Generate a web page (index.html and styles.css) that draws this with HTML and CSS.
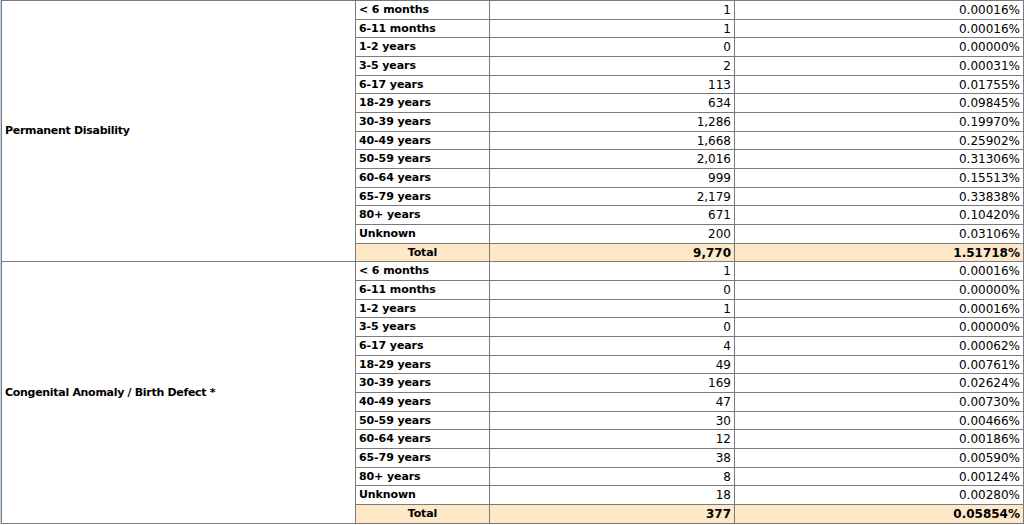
FILE: index.html
```html
<!DOCTYPE html>
<html>
<head>
<meta charset="utf-8">
<link rel="stylesheet" href="styles.css">
</head>
<body>
<div class="frame">
<table class="stats">
<colgroup><col class="c1"><col class="c2"><col class="c3"><col class="c4"></colgroup>
<tbody>
<tr><td class="group" rowspan="14">Permanent Disability</td><td class="age">&lt; 6 months</td><td class="num">1</td><td class="num">0.00016%</td></tr>
<tr><td class="age">6-11 months</td><td class="num">1</td><td class="num">0.00016%</td></tr>
<tr><td class="age">1-2 years</td><td class="num">0</td><td class="num">0.00000%</td></tr>
<tr><td class="age">3-5 years</td><td class="num">2</td><td class="num">0.00031%</td></tr>
<tr><td class="age">6-17 years</td><td class="num">113</td><td class="num">0.01755%</td></tr>
<tr><td class="age">18-29 years</td><td class="num">634</td><td class="num">0.09845%</td></tr>
<tr><td class="age">30-39 years</td><td class="num">1,286</td><td class="num">0.19970%</td></tr>
<tr><td class="age">40-49 years</td><td class="num">1,668</td><td class="num">0.25902%</td></tr>
<tr><td class="age">50-59 years</td><td class="num">2,016</td><td class="num">0.31306%</td></tr>
<tr><td class="age">60-64 years</td><td class="num">999</td><td class="num">0.15513%</td></tr>
<tr><td class="age">65-79 years</td><td class="num">2,179</td><td class="num">0.33838%</td></tr>
<tr><td class="age">80+ years</td><td class="num">671</td><td class="num">0.10420%</td></tr>
<tr><td class="age">Unknown</td><td class="num">200</td><td class="num">0.03106%</td></tr>
<tr class="total"><td class="age">Total</td><td class="num">9,770</td><td class="num">1.51718%</td></tr>
<tr><td class="group" rowspan="14">Congenital Anomaly / Birth Defect *</td><td class="age">&lt; 6 months</td><td class="num">1</td><td class="num">0.00016%</td></tr>
<tr><td class="age">6-11 months</td><td class="num">0</td><td class="num">0.00000%</td></tr>
<tr><td class="age">1-2 years</td><td class="num">1</td><td class="num">0.00016%</td></tr>
<tr><td class="age">3-5 years</td><td class="num">0</td><td class="num">0.00000%</td></tr>
<tr><td class="age">6-17 years</td><td class="num">4</td><td class="num">0.00062%</td></tr>
<tr><td class="age">18-29 years</td><td class="num">49</td><td class="num">0.00761%</td></tr>
<tr><td class="age">30-39 years</td><td class="num">169</td><td class="num">0.02624%</td></tr>
<tr><td class="age">40-49 years</td><td class="num">47</td><td class="num">0.00730%</td></tr>
<tr><td class="age">50-59 years</td><td class="num">30</td><td class="num">0.00466%</td></tr>
<tr><td class="age">60-64 years</td><td class="num">12</td><td class="num">0.00186%</td></tr>
<tr><td class="age">65-79 years</td><td class="num">38</td><td class="num">0.00590%</td></tr>
<tr><td class="age">80+ years</td><td class="num">8</td><td class="num">0.00124%</td></tr>
<tr><td class="age">Unknown</td><td class="num">18</td><td class="num">0.00280%</td></tr>
<tr class="total"><td class="age">Total</td><td class="num">377</td><td class="num">0.05854%</td></tr>
</tbody>
</table>
</div>
</body>
</html>
```
FILE: styles.css
```css
html, body {
  margin: 0;
  padding: 0;
  background: #ffffff;
}
.frame {
  width: 1024px;
  box-sizing: border-box;
  border-left: 1px solid #b9d4f2;
  border-right: 1px solid #b9d4f2;
}
.stats {
  width: 1022px;
  table-layout: fixed;
  border-collapse: collapse;
  font-family: "DejaVu Sans", Verdana, sans-serif;
  font-size: 12px;
  color: #000;
}
.c1 { width: 354px; }
.c2 { width: 134px; }
.c3 { width: 245px; }
.c4 { width: 289px; }
.stats tr { height: 18.68px; }
.stats td {
  border: 1px solid #7a7a7a;
  padding: 0 3px;
  line-height: 14px;
  white-space: nowrap;
  vertical-align: middle;
}
.group {
  font-weight: bold;
  font-size: 11px;
  letter-spacing: -0.3px;
  padding-left: 2px;
}
.age {
  font-weight: bold;
  font-size: 11px;
  letter-spacing: -0.1px;
}
.num {
  text-align: right;
}
.total td {
  background: #fde9c8;
  font-weight: bold;
}
.total .age {
  text-align: center;
}
```
